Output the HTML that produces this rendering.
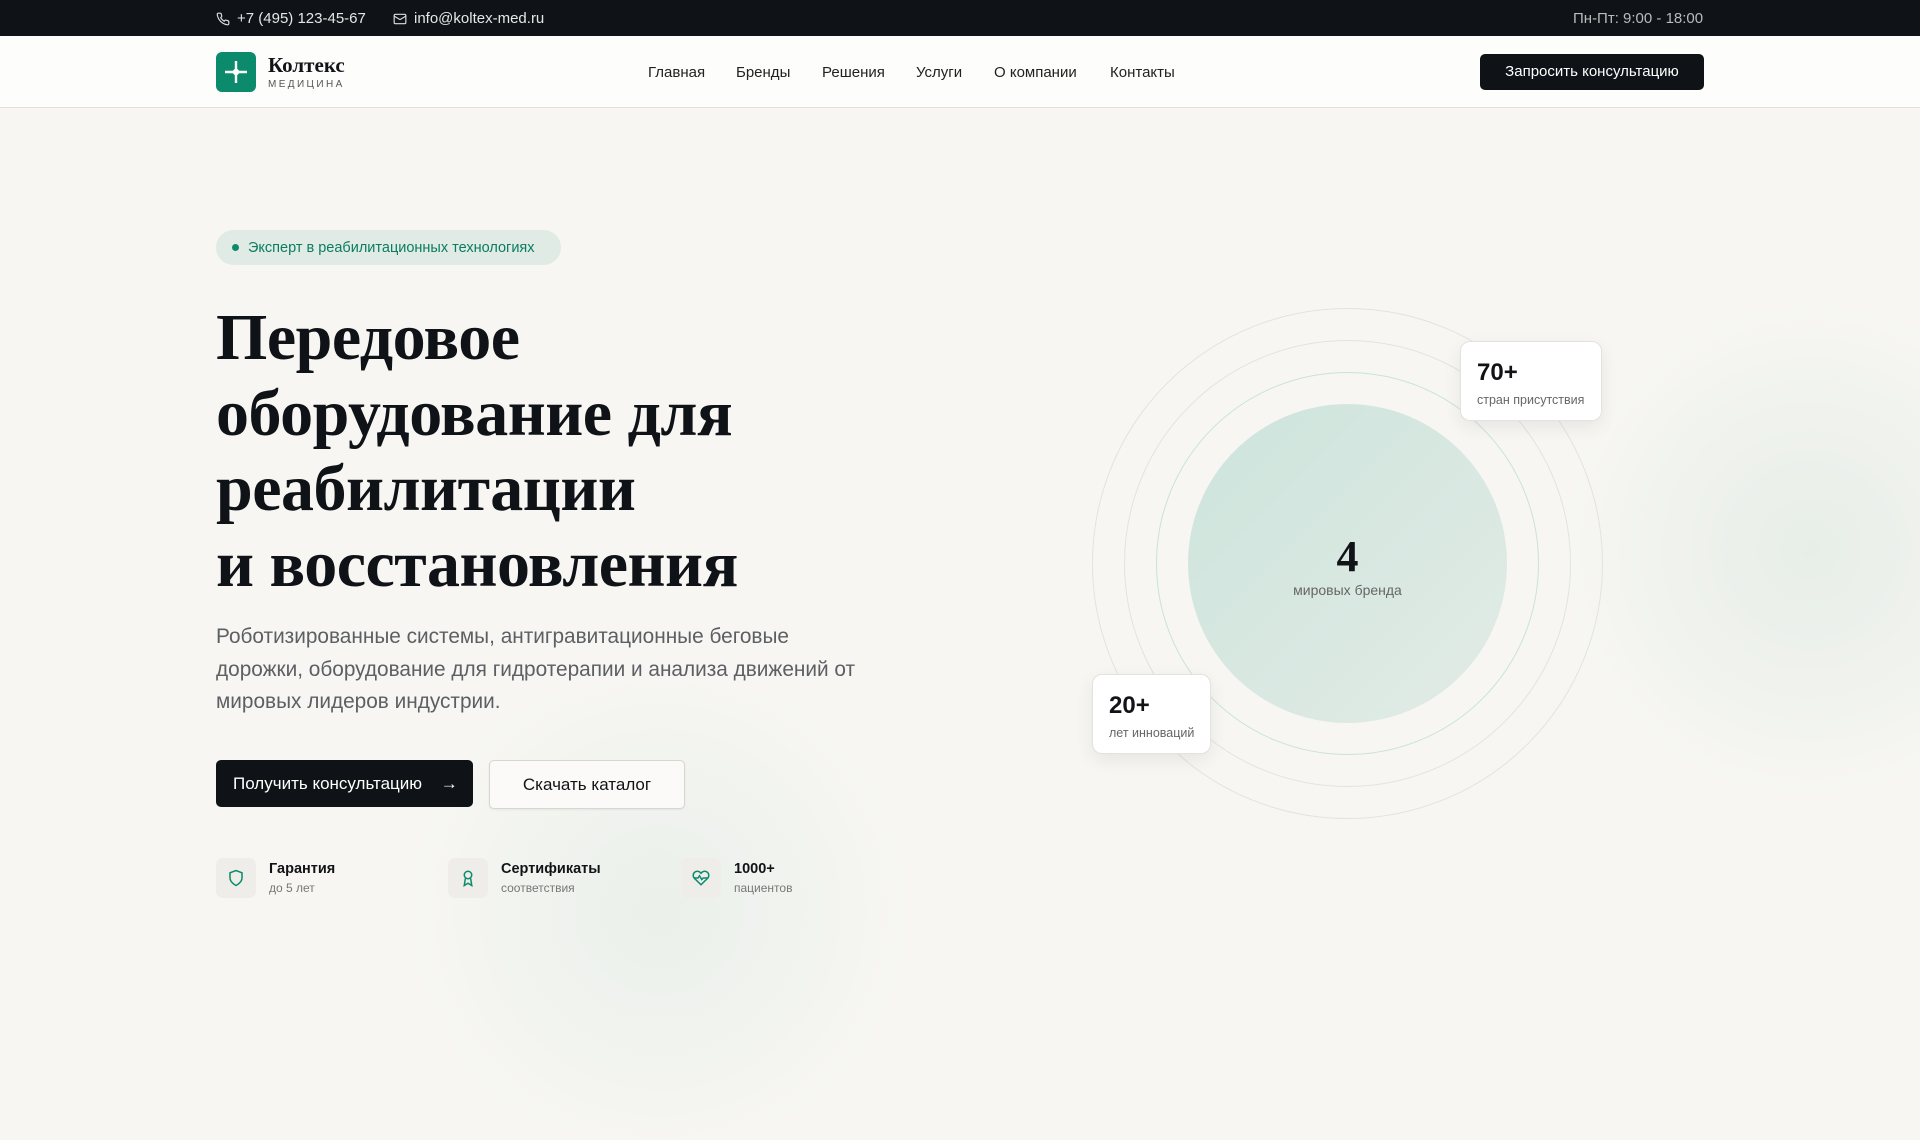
<!DOCTYPE html>
<html><head><meta charset="utf-8"><style>
*{margin:0;padding:0;box-sizing:border-box}
body{width:1920px;height:1080px;overflow:hidden;background:#f7f6f3;font-family:"Liberation Sans","DejaVu Sans",sans-serif;color:#111317;position:relative}
.top{height:36px;background:#0f1217;color:#e6e6e6;font-size:15px;position:relative}
.top span{position:absolute;top:10px;display:flex;align-items:center;gap:7px}
.hdr{height:72px;background:#fdfdfc;border-bottom:1px solid #e2e0da;position:relative}
.logo{position:absolute;left:216px;top:16px;width:40px;height:40px;border-radius:6px;background:#0b8a6c}
.lt{position:absolute;left:268px;top:18px;font-family:"Liberation Serif",serif;font-weight:bold;font-size:21px;line-height:22px}
.ls{position:absolute;left:268px;top:43px;font-size:10px;letter-spacing:2.4px;color:#555}
.nav{position:absolute;top:28px;font-size:15px;color:#222}
.hb{position:absolute;left:1480px;top:18px;width:224px;height:36px;background:#0f1217;color:#fff;border-radius:5px;font-size:15px;text-align:center;line-height:36px}
.badge{position:absolute;left:216px;top:230px;width:345px;height:35px;border-radius:18px;background:#dfebe4;color:#0b7c62;font-size:14.5px;line-height:36px;padding-left:32px}
.badge:before{content:"";position:absolute;left:16px;top:14px;width:7px;height:7px;border-radius:50%;background:#0b8a6c}
h1{position:absolute;left:216px;top:300px;font-family:"Liberation Serif",serif;font-weight:bold;font-size:66px;line-height:75.5px;color:#0f1217;letter-spacing:-0.5px}
.p{position:absolute;left:216px;top:621px;width:720px;font-size:20.8px;line-height:32.5px;color:#5c5f63}
.b1{position:absolute;left:216px;top:760px;width:257px;height:47px;background:#0f1217;color:#fff;border-radius:5px;font-size:17px;line-height:47px;padding-left:17px}
.b2{position:absolute;left:489px;top:760px;width:196px;height:49px;background:#fbfaf8;border:1px solid #d8d6d0;border-radius:5px;font-size:17px;line-height:47px;text-align:center;box-shadow:0 1px 2px rgba(0,0,0,.06)}
.f{position:absolute;top:858px;display:flex;gap:13px}
.fi{width:40px;height:40px;border-radius:7px;background:#eeede9;display:flex;align-items:center;justify-content:center}
.ft{font-size:14.5px;font-weight:bold;margin-top:3px}
.fs{font-size:12px;color:#777;margin-top:4px}
.ring{position:absolute;border-radius:50%;border:1px solid #e3e3de}
.card{position:absolute;background:#fff;border:1px solid #e4e2dc;border-radius:10px;box-shadow:0 6px 18px rgba(0,0,0,.07);padding:17px 16px;white-space:nowrap}
.card b{display:block;font-size:24px}
.card i{display:block;font-style:normal;font-size:12.5px;color:#666;margin-top:6px}
</style></head><body>
<div style="position:absolute;left:1560px;top:300px;width:500px;height:500px;border-radius:50%;background:radial-gradient(circle,rgba(220,232,224,.6),rgba(247,246,243,0) 70%)"></div>
<div style="position:absolute;left:380px;top:680px;width:560px;height:460px;border-radius:50%;background:radial-gradient(circle,rgba(226,236,229,.6),rgba(247,246,243,0) 70%)"></div>
<div class="top">
<span style="left:216px"><svg width="14" height="14" viewBox="0 0 24 24" fill="none" stroke="#ddd" stroke-width="2"><path d="M22 16.9v3a2 2 0 0 1-2.2 2 19.8 19.8 0 0 1-8.6-3.1 19.5 19.5 0 0 1-6-6A19.8 19.8 0 0 1 2.1 4.2 2 2 0 0 1 4.1 2h3a2 2 0 0 1 2 1.7c.1.9.4 1.8.7 2.7a2 2 0 0 1-.5 2.1L8 9.8a16 16 0 0 0 6 6l1.3-1.3a2 2 0 0 1 2.1-.4c.9.3 1.8.6 2.7.7a2 2 0 0 1 1.7 2z"/></svg>+7 (495) 123-45-67</span>
<span style="left:393px"><svg width="14" height="14" viewBox="0 0 24 24" fill="none" stroke="#ddd" stroke-width="2"><rect x="2" y="4" width="20" height="16" rx="2"/><path d="M22 7l-10 6L2 7"/></svg>info@koltex-med.ru</span>
<span style="left:1573px;color:#bbb">Пн-Пт: 9:00 - 18:00</span>
</div>
<div class="hdr">
<div class="logo"><svg width="40" height="40" viewBox="0 0 40 40"><path d="M20 9v22M9 20h22" stroke="#fff" stroke-width="2.4"/><circle cx="20" cy="20" r="3.2" fill="#fff"/></svg></div>
<div class="lt">Колтекс</div><div class="ls">МЕДИЦИНА</div>
<span class="nav" style="left:648px">Главная</span>
<span class="nav" style="left:736px">Бренды</span>
<span class="nav" style="left:822px">Решения</span>
<span class="nav" style="left:916px">Услуги</span>
<span class="nav" style="left:994px">О компании</span>
<span class="nav" style="left:1110px">Контакты</span>
<div class="hb">Запросить консультацию</div>
</div>
<div class="badge">Эксперт в реабилитационных технологиях</div>
<h1>Передовое<br>оборудование для<br>реабилитации<br>и восстановления</h1>
<div class="p">Роботизированные системы, антигравитационные беговые<br>дорожки, оборудование для гидротерапии и анализа движений от<br>мировых лидеров индустрии.</div>
<div class="b1">Получить консультацию <span style="margin-left:14px">→</span></div>
<div class="b2">Скачать каталог</div>
<div class="f" style="left:216px"><div class="fi"><svg width="18" height="18" viewBox="0 0 24 24" fill="none" stroke="#0b8a6c" stroke-width="2"><path d="M12 22s8-4 8-10V5l-8-3-8 3v7c0 6 8 10 8 10z"/></svg></div><div><div class="ft">Гарантия</div><div class="fs">до 5 лет</div></div></div>
<div class="f" style="left:448px"><div class="fi"><svg width="18" height="18" viewBox="0 0 24 24" fill="none" stroke="#0b8a6c" stroke-width="2"><circle cx="12" cy="8" r="5"/><path d="M8.5 12.5L7 22l5-3 5 3-1.5-9.5"/></svg></div><div><div class="ft">Сертификаты</div><div class="fs">соответствия</div></div></div>
<div class="f" style="left:681px"><div class="fi"><svg width="20" height="18" viewBox="0 0 24 24" fill="none" stroke="#0b8a6c" stroke-width="2"><path d="M20.8 4.6a5.5 5.5 0 0 0-7.8 0L12 5.7l-1-1.1a5.5 5.5 0 0 0-7.8 7.8L12 21l8.8-8.6a5.5 5.5 0 0 0 0-7.8z"/><path d="M3 12h5l2-3 3 5 2-2h6"/></svg></div><div><div class="ft">1000+</div><div class="fs">пациентов</div></div></div>
<div class="ring" style="left:1092px;top:308px;width:511px;height:511px"></div>
<div class="ring" style="left:1124px;top:340px;width:447px;height:447px"></div>
<div class="ring" style="left:1156px;top:372px;width:383px;height:383px;border-color:#c9e3d9"></div>
<div style="position:absolute;left:1188px;top:404px;width:319px;height:319px;border-radius:50%;background:linear-gradient(135deg,#cce4dc,#e3ebe6)"></div>
<div style="position:absolute;left:1188px;top:535px;width:319px;text-align:center;font-family:'Liberation Serif',serif;font-weight:bold;font-size:44px;line-height:44px">4</div>
<div style="position:absolute;left:1188px;top:582px;width:319px;text-align:center;font-size:14px;color:#666">мировых бренда</div>
<div class="card" style="left:1460px;top:341px;width:142px;height:80px"><b>70+</b><i>стран присутствия</i></div>
<div class="card" style="left:1092px;top:674px;width:119px;height:80px"><b>20+</b><i>лет инноваций</i></div>
</body></html>
